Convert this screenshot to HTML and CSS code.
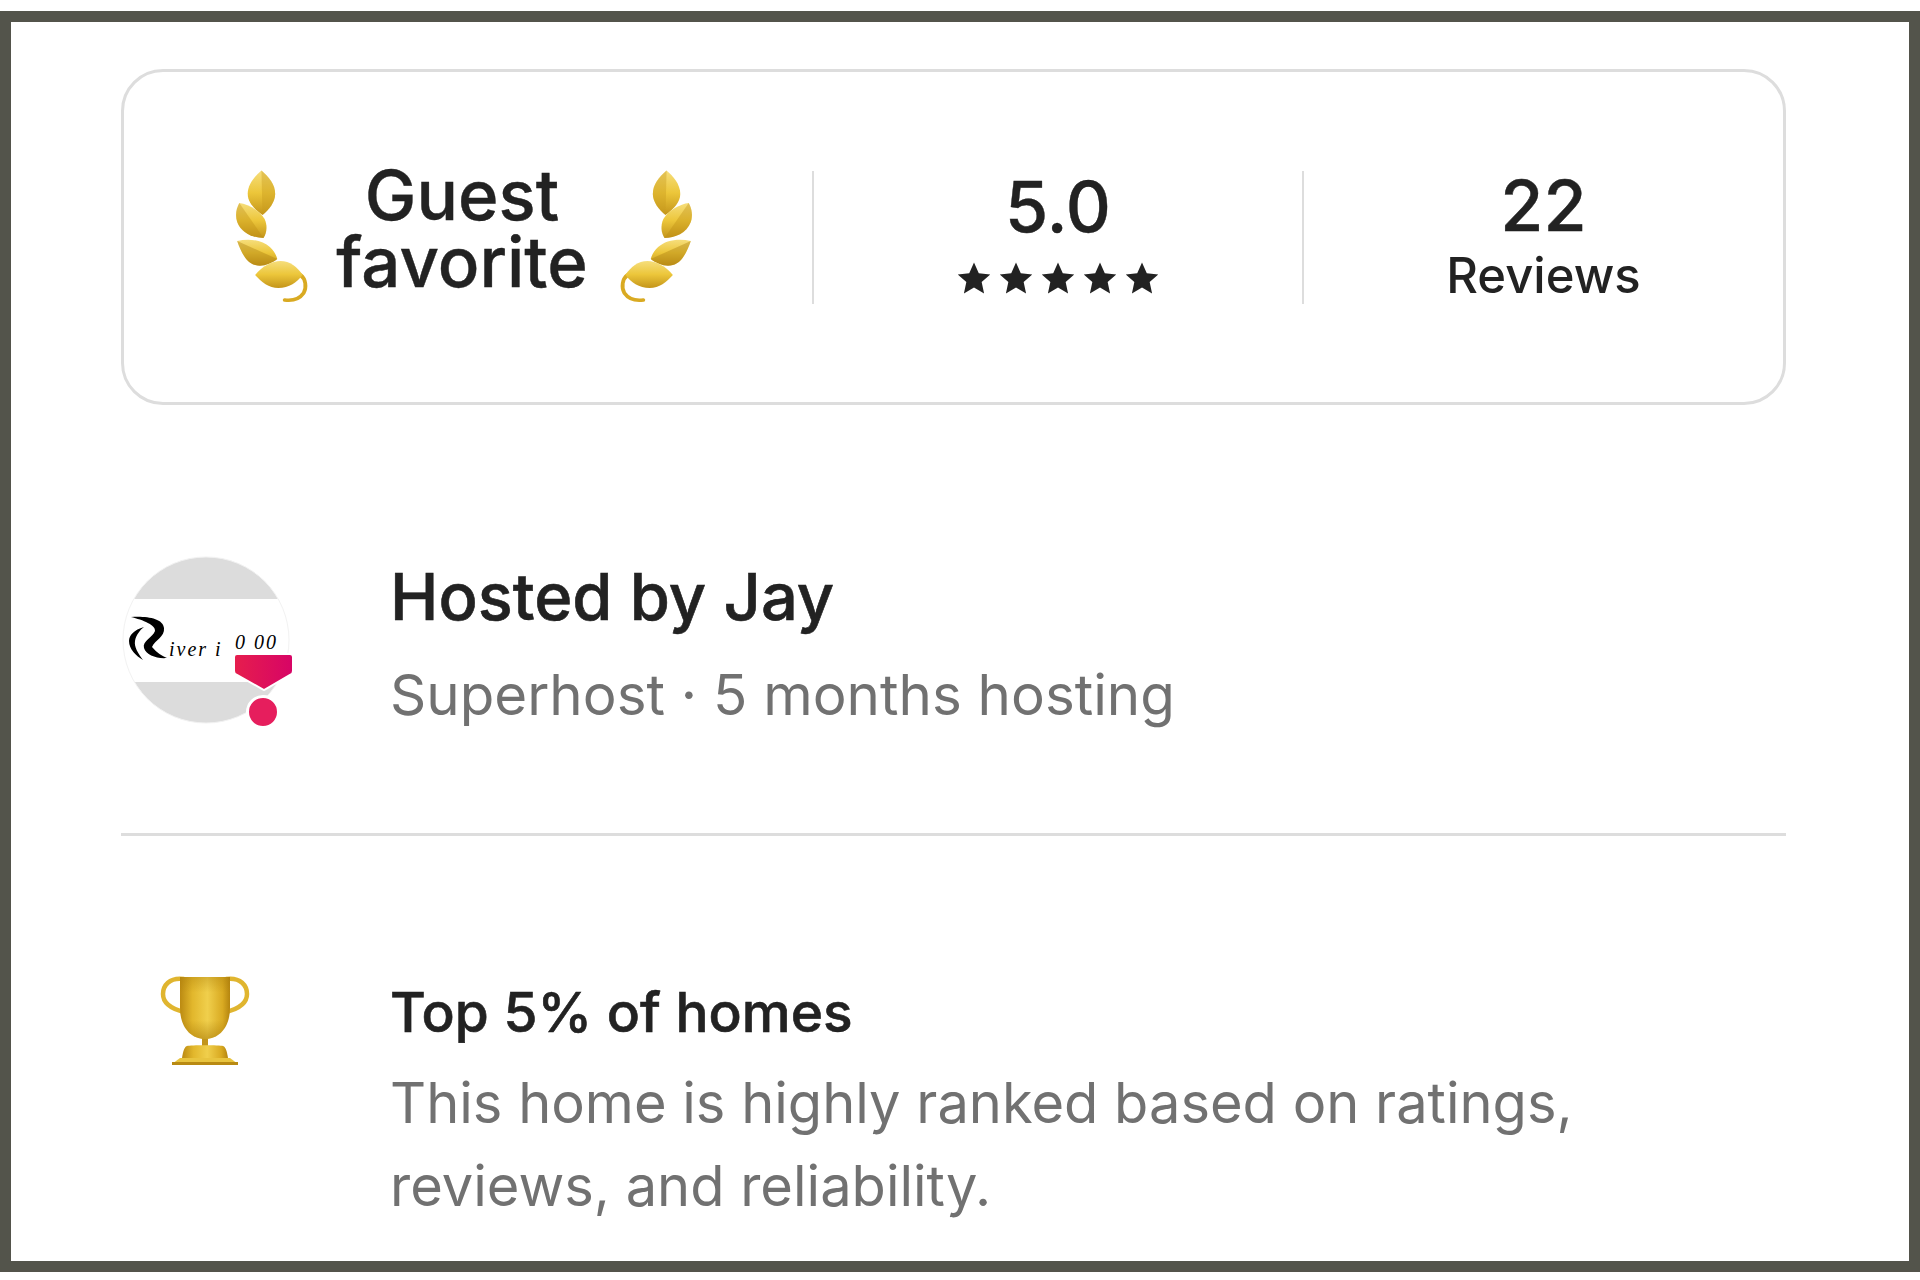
FILE: index.html
```html
<!DOCTYPE html>
<html lang="en">

<head>
    <meta charset="UTF-8">
    <meta name="viewport" content="width=device-width, initial-scale=1.0">
    <title>Listing highlights</title>
    <link rel="stylesheet" href="styles.css">
</head>

<body>
    <svg class="defs" width="0" height="0">
        <defs>
            <linearGradient id="goldLight" x1="0" y1="0" x2="0" y2="1">
                <stop offset="0" stop-color="#f6de7c" />
                <stop offset="0.5" stop-color="#ecc63a" />
                <stop offset="1" stop-color="#c4951a" />
            </linearGradient>
            <linearGradient id="goldSide" x1="0" y1="0" x2="1" y2="0">
                <stop offset="0" stop-color="#bb8a12" />
                <stop offset="0.25" stop-color="#e2b72c" />
                <stop offset="0.55" stop-color="#f0cf4c" />
                <stop offset="0.85" stop-color="#d9aa22" />
                <stop offset="1" stop-color="#b5850f" />
            </linearGradient>
            <linearGradient id="cupShade" x1="0" y1="0" x2="0" y2="1">
                <stop offset="0" stop-color="#a87a08" stop-opacity="0.35" />
                <stop offset="0.25" stop-color="#a87a08" stop-opacity="0" />
                <stop offset="0.7" stop-color="#a87a08" stop-opacity="0" />
                <stop offset="1" stop-color="#a87a08" stop-opacity="0.55" />
            </linearGradient>
            <linearGradient id="pinkBadge" x1="0" y1="0" x2="1" y2="0">
                <stop offset="0" stop-color="#e61e4d" />
                <stop offset="1" stop-color="#d70466" />
            </linearGradient>
            <clipPath id="avatarClip">
                <circle cx="85" cy="85" r="83" />
            </clipPath>
            <symbol id="laurel" viewBox="0 0 72 136" preserveAspectRatio="none">
                <path fill="url(#goldLight)" d="M26 1.5C33 8 39 15 39 25C39 33 33 41 27 46C19 40 13 33 13 25C13 15 20 7 26 1.5Z" />
                <path fill="#c79a1f" opacity="0.4" d="M26 1.5C33 8 39 15 39 25C39 33 33 41 27 46Z" />
                <path fill="url(#goldLight)" d="M5 34C13 35 24 41 29 50C32 57 31 64 28 69C18 69 7 64 3 53C1 46 2 40 5 34Z" />
                <path fill="#b98a12" opacity="0.35" d="M5 34L28 69C18 69 7 64 3 53C1 46 2 40 5 34Z" />
                <path fill="url(#goldLight)" d="M3 72C14 69 27 71 34 78C38 82 40 86 41 90C35 95 27 98 20 96C12 94 7 84 3 72Z" />
                <path fill="#a97c0e" opacity="0.4" d="M3 72L41 90C35 95 27 98 20 96C12 94 7 84 3 72Z" />
                <path fill="none" stroke="#d9aa22" stroke-width="3.6" stroke-linecap="round" d="M63 106C68 110 69 118 66 124C62 130 55 132 48 131" />
                <path fill="url(#goldLight)" d="M20 106C27 97 36 92 44 92C53 92 60 98 65 106C60 113 52 119 42 119C33 119 26 113 20 106Z" />
            </symbol>
        </defs>
    </svg>

    <div class="frame">
        <section class="summary-card">
            <div class="summary-cell guest-cell">
                <svg class="laurel"><use href="#laurel" /></svg>
                <div class="guest-label">Guest<br>favorite</div>
                <svg class="laurel flip"><use href="#laurel" /></svg>
            </div>
            <div class="summary-cell rating-cell">
                <div class="big-number">5.0</div>
                <div class="stars">
                    <svg viewBox="0 0 32 32"><path d="M16 1.5l4.5 10 10.8 1.1-8.1 7.2 2.3 10.7L16 25l-9.5 5.5 2.3-10.7-8.1-7.2 10.8-1.1z" /></svg>
                    <svg viewBox="0 0 32 32"><path d="M16 1.5l4.5 10 10.8 1.1-8.1 7.2 2.3 10.7L16 25l-9.5 5.5 2.3-10.7-8.1-7.2 10.8-1.1z" /></svg>
                    <svg viewBox="0 0 32 32"><path d="M16 1.5l4.5 10 10.8 1.1-8.1 7.2 2.3 10.7L16 25l-9.5 5.5 2.3-10.7-8.1-7.2 10.8-1.1z" /></svg>
                    <svg viewBox="0 0 32 32"><path d="M16 1.5l4.5 10 10.8 1.1-8.1 7.2 2.3 10.7L16 25l-9.5 5.5 2.3-10.7-8.1-7.2 10.8-1.1z" /></svg>
                    <svg viewBox="0 0 32 32"><path d="M16 1.5l4.5 10 10.8 1.1-8.1 7.2 2.3 10.7L16 25l-9.5 5.5 2.3-10.7-8.1-7.2 10.8-1.1z" /></svg>
                </div>
            </div>
            <div class="summary-cell reviews-cell">
                <div class="big-number">22</div>
                <div class="reviews-label">Reviews</div>
            </div>
        </section>

        <section class="host-row">
            <svg class="avatar" viewBox="0 0 174 176">
                <g clip-path="url(#avatarClip)">
                    <rect width="174" height="176" fill="#fff" />
                    <rect width="174" height="44" fill="#dcdcdc" />
                    <rect y="127" width="174" height="49" fill="#dcdcdc" />
                    <path d="M10 62C25 61 42 63 43 73C44 82 34 85 31 92C36 98 41 101 46 103C36 104 25 100 23 93C21 86 32 82 34 76C35 70 22 65 10 62Z" />
                    <path d="M23 72C13 75 8 80 8 86C8 94 15 101 22 105C17 98 13 92 14 86C15 80 19 75 23 72Z" />
                    <text class="logo-text" x="48" y="101">iver i</text>
                    <text class="logo-text" x="114" y="94">0 00</text>
                </g>
                <circle cx="85" cy="85" r="83" fill="none" stroke="#f2f2f2" stroke-width="1" />
                <path fill="url(#pinkBadge)" stroke="#fff" stroke-width="2" d="M116 99H169Q172 99 172 102V116Q172 119 169 120L143 135L116 120Q113 119 113 116V102Q113 99 116 99Z" />
                <circle cx="142" cy="157" r="15.5" fill="#e61e5d" stroke="#fff" stroke-width="3" />
            </svg>
            <div class="host-text">
                <h2>Hosted by Jay</h2>
                <p>Superhost · 5 months hosting</p>
            </div>
        </section>

        <hr class="divider">

        <section class="highlight-row">
            <div class="highlight-icon">
                <svg class="trophy" viewBox="0 0 92 93">
                    <path fill="none" stroke="#e0b52f" stroke-width="4.5" d="M24 5C9 3 3 12 3 20C3 30 12 35 24 38" />
                    <path fill="none" stroke="#e0b52f" stroke-width="4.5" d="M66 5C81 3 87 12 87 20C87 30 78 35 66 38" />
                    <path fill="#c2951c" d="M42 62H48V74H42Z" />
                    <path fill="url(#goldSide)" d="M20 3H70V34C70 52 60 65 45 65C30 65 20 52 20 34Z" />
                    <path fill="url(#cupShade)" d="M20 3H70V34C70 52 60 65 45 65C30 65 20 52 20 34Z" />
                    <path fill="url(#goldSide)" d="M27 72C30 71 60 71 63 72C66 73 67 78 68 84H22C23 78 24 73 27 72Z" />
                    <path fill="#e8c43f" d="M20 84H70L78 90H12Z" />
                    <path fill="#b98a12" d="M12 88H78V91H12Z" />
                </svg>
            </div>
            <div class="highlight-text">
                <h3>Top 5% of homes</h3>
                <p>This home is highly ranked based on ratings,<br>reviews, and reliability.</p>
            </div>
        </section>
    </div>
</body>

</html>
```

FILE: styles.css
```css
body {
    margin: 0;
    padding: 0;
    background-color: white;
    font-family: 'Inter', 'Liberation Sans', sans-serif;
    color: #222222;
}

.defs {
    display: block;
}

.frame {
    box-sizing: border-box;
    height: 1261px;
    margin-top: 11px;
    padding: 47px 123px 0 110px;
    border: 11px solid #53544b;
    overflow: hidden;
}

.summary-card {
    display: flex;
    align-items: center;
    height: 336px;
    box-sizing: border-box;
    border: 3px solid #dddddd;
    border-radius: 42px;
}

.summary-cell {
    display: flex;
    flex-direction: column;
    align-items: center;
    justify-content: center;
    height: 133px;
    box-sizing: border-box;
}

.guest-cell {
    flex-direction: row;
    width: 688px;
    padding-right: 8px;
    gap: 26px;
}

.rating-cell,
.reviews-cell {
    border-left: 2px solid #dddddd;
}

.rating-cell {
    width: 490px;
    padding-bottom: 11px;
}

.reviews-cell {
    flex: 1;
    padding-bottom: 4px;
}

.laurel {
    width: 76px;
    height: 136px;
}

.flip {
    transform: scaleX(-1);
}

.guest-label {
    margin: 0 4px 16px 0;
    font-size: 69px;
    font-weight: 500;
    line-height: 67px;
    text-align: center;
    -webkit-text-stroke: 0.4px #222222;
}

.big-number {
    font-size: 70px;
    font-weight: 500;
    line-height: 78px;
    -webkit-text-stroke: 0.4px #222222;
}

.stars {
    display: flex;
    gap: 8px;
    margin-top: 15px;
}

.stars svg {
    width: 34px;
    height: 34px;
    fill: #222222;
}

.reviews-label {
    margin-top: 4px;
    font-size: 49px;
    font-weight: 500;
    line-height: 54px;
}

.host-row {
    display: flex;
    align-items: center;
    margin-top: 150px;
}

.avatar {
    width: 174px;
    height: 176px;
    margin-right: 95px;
}

.logo-text {
    font-family: 'Liberation Serif', serif;
    font-style: italic;
    font-size: 20px;
    letter-spacing: 2px;
}

.host-text h2 {
    margin: 0;
    font-size: 65px;
    font-weight: 500;
    line-height: 76px;
    -webkit-text-stroke: 0.6px #222222;
}

.host-text p {
    margin: 28px 0 0;
    font-size: 56.5px;
    line-height: 64px;
    color: #717171;
}

.divider {
    height: 3px;
    margin: 102px 0 0;
    border: none;
    background-color: #dddddd;
}

.highlight-row {
    display: flex;
    margin-top: 138px;
}

.highlight-icon {
    width: 269px;
    padding-left: 39px;
    box-sizing: border-box;
    flex-shrink: 0;
}

.trophy {
    display: block;
    width: 92px;
    height: 93px;
}

.highlight-text h3 {
    margin: 0;
    padding-top: 2px;
    font-size: 55px;
    font-weight: 500;
    line-height: 72px;
    -webkit-text-stroke: 0.6px #222222;
}

.highlight-text p {
    margin: 14px 0 0;
    font-size: 56px;
    line-height: 83px;
    color: #717171;
}
```
